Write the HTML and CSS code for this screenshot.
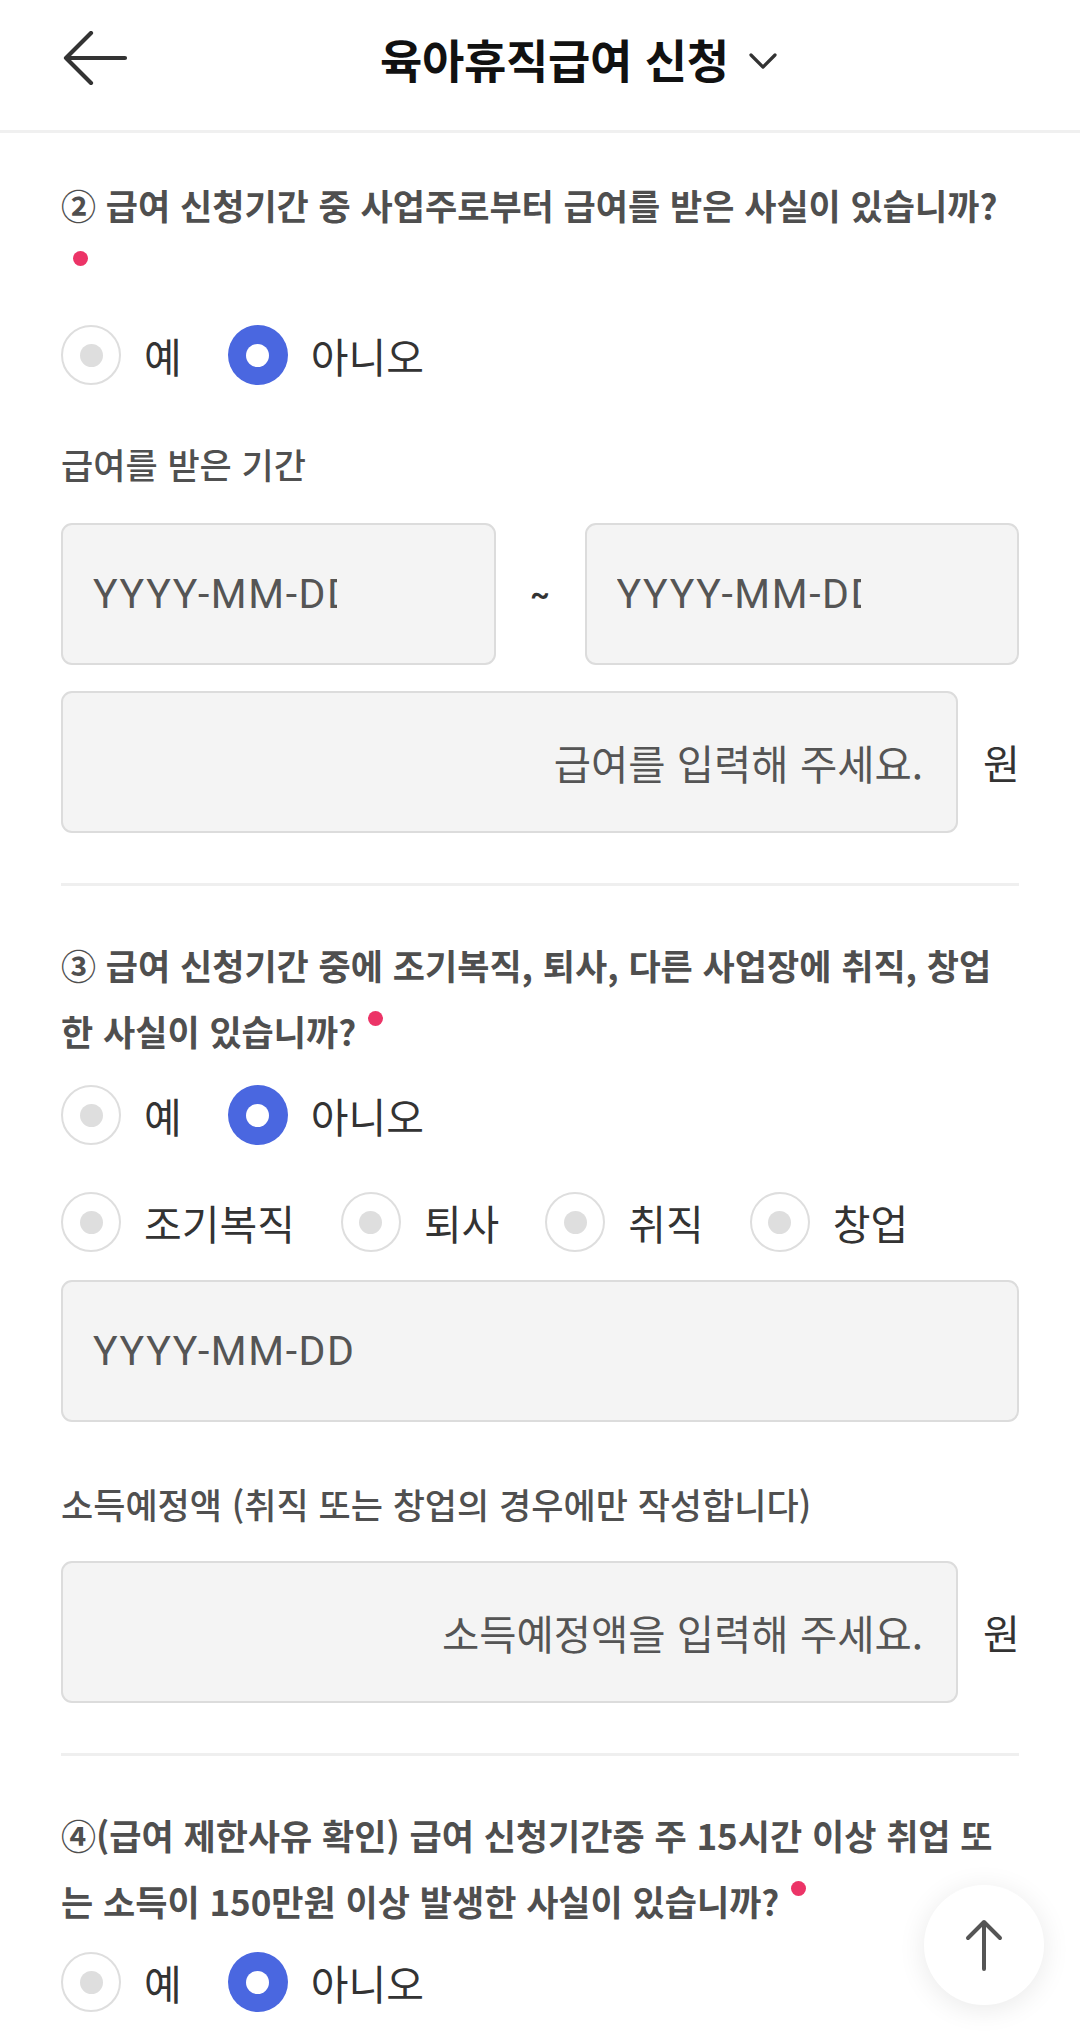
FILE: index.html
```html
<!DOCTYPE html>
<html lang="ko">
<head>
<meta charset="utf-8">
<title>육아휴직급여 신청</title>
<link rel="stylesheet" href="styles.css">
</head>
<body>
<header class="topbar">
  <button class="back" aria-label="뒤로">
    <svg width="66" height="54" viewBox="0 0 66 54"><path d="M63 27 H4 M29 2 L4 27 L29 52" fill="none" stroke="#333" stroke-width="4.2" stroke-linecap="round" stroke-linejoin="round"/></svg>
  </button>
  <h1 class="title">육아휴직급여 신청
    <svg class="chev" width="30" height="20" viewBox="0 0 30 20"><path d="M3 4 L15 16 L27 4" fill="none" stroke="#333" stroke-width="3.2" stroke-linecap="round" stroke-linejoin="round"/></svg>
  </h1>
</header>

<main class="form">
  <section class="q q-first">
    <p class="q-text">② 급여 신청기간 중 사업주로부터 급여를 받은 사실이 있습니까?<br><span class="req req-start"></span></p>
    <div class="radios">
      <label class="opt"><span class="radio"></span><span class="opt-label">예</span></label>
      <label class="opt"><span class="radio on"></span><span class="opt-label">아니오</span></label>
    </div>
    <p class="label label-first">급여를 받은 기간</p>
    <div class="date-range">
      <div class="field date"><span class="ph clip">YYYY-MM-DD</span></div>
      <span class="tilde">~</span>
      <div class="field date"><span class="ph clip">YYYY-MM-DD</span></div>
    </div>
    <div class="amount-row">
      <div class="field amount"><span class="ph">급여를 입력해 주세요.</span></div>
      <span class="unit">원</span>
    </div>
  </section>

  <hr class="divider">

  <section class="q">
    <p class="q-text">③ 급여 신청기간 중에 조기복직, 퇴사, 다른 사업장에 취직, 창업<br>한 사실이 있습니까?<span class="req"></span></p>
    <div class="radios">
      <label class="opt"><span class="radio"></span><span class="opt-label">예</span></label>
      <label class="opt"><span class="radio on"></span><span class="opt-label">아니오</span></label>
    </div>
    <div class="radios radios-sub">
      <label class="opt"><span class="radio"></span><span class="opt-label">조기복직</span></label>
      <label class="opt"><span class="radio"></span><span class="opt-label">퇴사</span></label>
      <label class="opt"><span class="radio"></span><span class="opt-label">취직</span></label>
      <label class="opt"><span class="radio"></span><span class="opt-label">창업</span></label>
    </div>
    <div class="field date full"><span class="ph">YYYY-MM-DD</span></div>
    <p class="label label-income">소득예정액 (취직 또는 창업의 경우에만 작성합니다)</p>
    <div class="amount-row amount-income">
      <div class="field amount"><span class="ph">소득예정액을 입력해 주세요.</span></div>
      <span class="unit">원</span>
    </div>
  </section>

  <hr class="divider">

  <section class="q">
    <p class="q-text">④(급여 제한사유 확인) 급여 신청기간중 주 15시간 이상 취업 또<br>는 소득이 150만원 이상 발생한 사실이 있습니까?<span class="req"></span></p>
    <div class="radios radios-last">
      <label class="opt"><span class="radio"></span><span class="opt-label">예</span></label>
      <label class="opt"><span class="radio on"></span><span class="opt-label">아니오</span></label>
    </div>
  </section>
</main>

<button class="to-top" aria-label="맨 위로">
  <svg width="40" height="54" viewBox="0 0 40 54"><path d="M20 51 V4 M4 20 L20 4 L36 20" fill="none" stroke="#555" stroke-width="4" stroke-linecap="round" stroke-linejoin="round"/></svg>
</button>
</body>
</html>
```

FILE: styles.css
```css
* { box-sizing: border-box; }
html, body {
  margin: 0;
  padding: 0;
  background: #fff;
}
body {
  width: 1080px;
  height: 2036px;
  overflow: hidden;
  font-family: "Noto Sans CJK KR", "Noto Sans", sans-serif;
  color: #333;
}

/* header */
.topbar {
  height: 133px;
  border-bottom: 3px solid #f0f0f0;
  display: flex;
  align-items: flex-start;
  padding-left: 62px;
}
.back {
  margin-top: 31px;
  padding: 0;
  border: 0;
  background: none;
  width: 66px;
  height: 54px;
  display: block;
}
.back svg { display: block; }
.title {
  margin: 32px 0 0 252px;
  height: 52px;
  display: flex;
  align-items: center;
  font-size: 46px;
  font-weight: 700;
  color: #111;
  line-height: 52px;
  letter-spacing: -0.3px;
}
.chev {
  margin-left: 19px;
  margin-top: 6px;
}

/* form */
.form {
  padding: 0 61px;
}
.q { padding-top: 46px; }
.q-first { padding-top: 39px; }

.q-text {
  margin: 0;
  font-size: 35px;
  font-weight: 700;
  line-height: 66px;
  color: #4f4f4f;
  letter-spacing: 0;
  white-space: nowrap;
}
.req {
  display: inline-block;
  width: 15px;
  height: 15px;
  border-radius: 50%;
  background: #ec3467;
  margin-left: 12px;
  vertical-align: 20px;
}
.req-start { margin-left: 12px; }

.radios {
  display: flex;
  align-items: center;
  gap: 46px;
  height: 60px;
  margin-top: 21px;
}
.radios-sub { margin-top: 47px; }
.radios-last { margin-top: 18px; }
.opt {
  display: flex;
  align-items: center;
}
.radio {
  width: 60px;
  height: 60px;
  border-radius: 50%;
  border: 2.5px solid #dedede;
  background: #fff;
  display: flex;
  align-items: center;
  justify-content: center;
  flex: none;
}
.radio::after {
  content: "";
  width: 23px;
  height: 23px;
  border-radius: 50%;
  background: #dedede;
}
.radio.on {
  border: 0;
  background: #4a67e0;
}
.radio.on::after { background: #fff; }
.opt-label {
  margin-left: 23px;
  font-size: 41px;
  line-height: 60px;
  color: #333;
}

.label {
  margin: 0;
  font-size: 35px;
  font-weight: 500;
  line-height: 44px;
  color: #505050;
}
.label-first { margin-top: 57px; }
.label-income { margin-top: 60px; }

.field {
  height: 142px;
  background: #f4f4f4;
  border: 2px solid #dcdcdc;
  border-radius: 11px;
  display: flex;
  align-items: center;
}
.ph {
  color: #555;
  white-space: nowrap;
}
.date .ph {
  font-family: "Roboto", "Noto Sans", sans-serif;
  font-size: 41px;
  letter-spacing: 1.6px;
}
.date { padding-left: 30px; }
.clip {
  display: block;
  width: 244px;
  overflow: hidden;
}
.date-range {
  margin-top: 37px;
  display: grid;
  grid-template-columns: 1fr 89px 1fr;
  align-items: center;
}
.tilde {
  text-align: center;
  font-size: 30px;
  color: #333;
  font-family: "Roboto", sans-serif;
  font-weight: 700;
}
.full { margin-top: 28px; }

.amount-row {
  margin-top: 26px;
  display: flex;
  align-items: center;
}
.amount-income { margin-top: 35px; }
.amount {
  flex: 1;
  justify-content: flex-end;
  padding-right: 33px;
}
.amount .ph {
  font-size: 40.5px;
}
.unit {
  margin-left: 25px;
  font-size: 40px;
  color: #333;
  width: 36px;
}

.divider {
  margin: 50px 0 0;
  border: 0;
  height: 3px;
  background: #efefef;
}

/* floating button */
.to-top {
  position: fixed;
  right: 36px;
  bottom: 31px;
  width: 120px;
  height: 120px;
  border-radius: 50%;
  border: 0;
  background: #fff;
  box-shadow: 0 4px 28px rgba(0, 0, 0, 0.09);
  display: flex;
  align-items: center;
  justify-content: center;
  padding: 0;
}
.to-top svg { display: block; }
```
